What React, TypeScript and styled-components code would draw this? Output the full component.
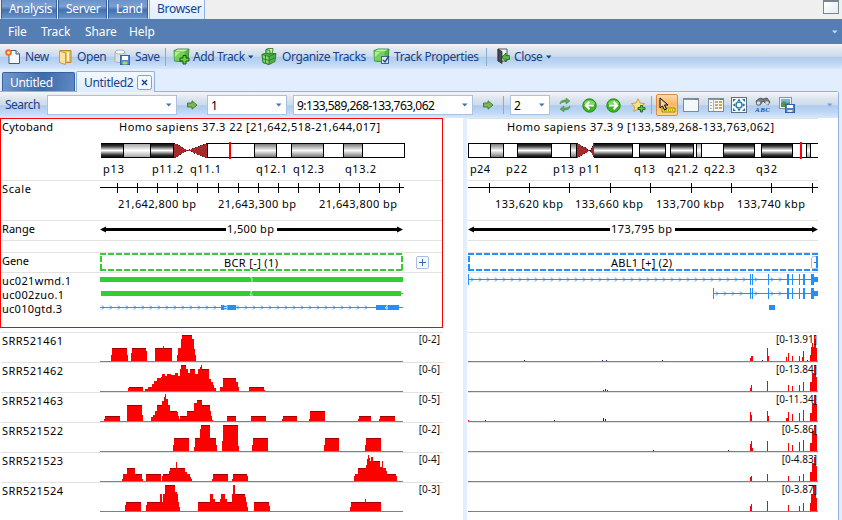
import React from 'react';
import styled, { createGlobalStyle } from 'styled-components';

const Global = createGlobalStyle`
  * { box-sizing: border-box; }
  body { margin: 0; background: #e2eefe; overflow: hidden; font-family: "Noto Sans", sans-serif; font-size: 12px; }
  svg { display: block; flex: none; }
  text { font-family: "Noto Sans", sans-serif; fill: #000; }
`;

const barGradient = 'linear-gradient(#f4f5f7 0%, #dde5ef 25%, #cddbeb 49%, #afcbed 53%, #bfd7f5 78%, #d8e8fc 100%)';

const Window = styled.div`
  width: 842px; height: 520px; display: flex; flex-direction: column; overflow: hidden; background: #e2eefe;
`;
const AppTabs = styled.div`
  display: flex; flex: none; height: 19px; background: #efefef; padding-left: 1px;
`;
const AppTab = styled.div<{ $w: number; $active?: boolean }>`
  width: ${p => p.$w}px; height: 19px; margin-right: 1px; padding-left: 7px; line-height: 18px; white-space: nowrap;
  letter-spacing: -0.3px;
  color: ${p => (p.$active ? '#15428b' : '#fff')};
  background: ${p => (p.$active ? 'linear-gradient(#f2f7fe, #e0edfe)' : 'linear-gradient(#6b93c8, #7ba0d0 35%, #4570ae 55%, #6893c8)')};
  border: solid ${p => (p.$active ? '#8fb2e2' : '#34619f')}; border-width: 0 1px; 
  border-bottom: ${p => (p.$active ? '0' : '1px solid #8fb2e2')};
`;
const WindowButton = styled.div`
  margin: 0 3px 0 auto; width: 16px; height: 14px; border: 1px solid #76858f; border-top-width: 2px;
  background: linear-gradient(135deg, #fff, #e3edf0);
`;
const MenuBar = styled.div`
  display: flex; flex: none; align-items: center; height: 25px; background: #557eb4; color: #fff; padding-left: 8px;
`;
const MenuItem = styled.div<{ $w: number }>`
  width: ${p => p.$w}px; flex: none; padding-bottom: 1px; letter-spacing: -0.1px;
`;
const ToolBar = styled.div`
  display: flex; flex: none; align-items: center; height: 25px; background: ${barGradient}; padding-left: 5px;
`;
const ToolItem = styled.div<{ $w: number; $gap?: number }>`
  width: ${p => p.$w}px; display: flex; align-items: center; flex: none; gap: ${p => p.$gap ?? 4}px;
  color: #15428b; white-space: nowrap; letter-spacing: -0.4px;
  span { line-height: 18px; padding-top: 1px; }
`;
const Divider = styled.div<{ $after: number }>`
  flex: none; width: 1px; height: 18px; background: #8aabd5; margin-right: ${p => p.$after}px;
`;
const Spacer = styled.div<{ $w: number }>`
  flex: none; width: ${p => p.$w}px;
`;
const DocTabs = styled.div`
  display: flex; flex: none; height: 22px; padding: 2px 0 0 2px; background: #e2eefe; align-items: flex-end;
`;
const DocTab = styled.div<{ $w: number; $active?: boolean }>`
  position: relative; z-index: ${p => (p.$active ? 1 : 0)};
  width: ${p => p.$w}px; height: ${p => (p.$active ? 21 : 19)}px; margin-bottom: ${p => (p.$active ? -1 : 0)}px; margin-right: 1px; padding: 0 2px 0 7px;
  display: flex; align-items: center; justify-content: space-between; letter-spacing: -0.3px;
  border: 1px solid ${p => (p.$active ? '#8fb2e2' : '#34619f')}; border-bottom: 0; border-radius: 2px 2px 0 0;
  color: ${p => (p.$active ? '#15428b' : '#fff')};
  background: ${p => (p.$active ? 'linear-gradient(#f3f8fe, #dfecfd)' : 'linear-gradient(100deg, #7199cd, #3f6bab 55%, #5d8ac4)')};
`;
const Document = styled.div`
  flex: 1; display: flex; flex-direction: column; margin-right: 3px; border: solid #8db2e6; border-width: 1px 1px 0 0;
  border-top-right-radius: 3px; background: #fff; min-height: 0;
`;
const SearchBar = styled.div`
  display: flex; flex: none; height: 26px; align-items: center; background: ${barGradient}; padding-left: 5px;
`;
const SearchLabel = styled.div`
  flex: none; width: 42px; color: #15428b; letter-spacing: -0.5px; padding-bottom: 1px;
`;
const Combo = styled.div<{ $w: number; $after: number }>`
  flex: none; width: ${p => p.$w}px; height: 20px; margin-right: ${p => p.$after}px; background: #fff; border: 1px solid #a9c1e3;
  display: flex; align-items: center; justify-content: space-between; padding: 0 4px 0 3px; white-space: nowrap;
  color: #000; letter-spacing: -0.52px;
`;
const WideCombo = styled(Combo)`
  letter-spacing: -0.52px;
`;
const IconSlot = styled.div<{ $w: number; $on?: boolean }>`
  flex: none; width: ${p => p.$w}px; height: 22px; display: flex; align-items: center; justify-content: center;
  ${p => p.$on && 'border: 1px solid #d98b4a; background: linear-gradient(#fbd9a8, #f8b764 45%, #fcd784); border-radius: 2px;'}
`;
const Views = styled.div`
  flex: 1; display: flex; min-height: 0; background: #fff;
`;
const Splitter = styled.div`
  width: 4px; margin: 0 1px 0 20px; background: #e2eefc; flex: none;
`;
const Panel = styled.div<{ $w: number }>`
  width: ${p => p.$w}px; flex: none; display: flex; flex-direction: column;
`;
const Header = styled.div<{ $selected?: boolean }>`
  height: 210px; flex: none; margin-bottom: 4px; overflow: hidden;
  border: ${p => (p.$selected ? '1px solid #f00' : '0 solid')}; 
`;
const Row = styled.div<{ $h: number; $line?: boolean; $pull?: boolean }>`
  position: relative; display: flex; height: ${p => p.$h}px; flex: none;
  border-top: ${p => (p.$line === false ? '0' : '1px solid #e2e2e2')};
  margin-left: ${p => (p.$pull ? 1 : 0)}px;
`;
const Names = styled.div`
  width: 99px; flex: none; padding-left: 1px;
`;
const RangeTag = styled.div<{ $right: number }>`
  position: absolute; right: ${p => p.$right}px; top: -1px; font-size: 10px; line-height: 14px; color: #111;
`;
const AddButton = styled.div`
  width: 13px; height: 13px; margin: 3px 0 0 13px; border: 1px solid #a9bfdf; border-radius: 2px; background: #f6faff;
  display: flex; align-items: center; justify-content: center;
`;

const Label = ({ x, y, w, children, size = 11 }: { x: number; y: number; w: number; children: string; size?: number }) => (
  <text x={x} y={y} textLength={w} lengthAdjust="spacing" fontSize={size}>{children}</text>
);
const NameLabel = ({ w, children, y = 12, h = 18 }: { w: number; children: string; y?: number; h?: number }) => (
  <svg width="98" height={h} overflow="visible"><Label x={0} y={y} w={w}>{children}</Label></svg>
);

const Caret = ({ color = '#15428b' }: { color?: string }) => (
  <svg width="6" height="4"><path d="M0 .5h5.5L2.75 3.5z" fill={color} /></svg>
);

/* ---------- toolbar icons ---------- */
const NewIcon = () => (
  <svg width="16" height="16" viewBox="0 0 16 16">
    <path d="M4 1.5h7l3.5 3.5v9.500h-10.500z" fill="#f4f8fd" stroke="#4a5d78" />
    <path d="M11 1.500v3.500h3.500" fill="#cad8ea" stroke="#4a5d78" />
    <circle cx="3.500" cy="3.500" r="3.300" fill="#f0682c" /><circle cx="3.500" cy="3.500" r="1.500" fill="#ffe36b" />
  </svg>
);
const OpenIcon = () => (
  <svg width="15" height="16" viewBox="0 0 15 16">
    <path d="M2 1.500h11v12h-11z" fill="#e9bf62" stroke="#bd8a31" />
    <path d="M1.500 2l6 2v11.500l-6-2z" fill="#fbe2a0" stroke="#d39b3c" /><path d="M9 3h2v9h-2z" fill="#fff3cf" />
  </svg>
);
const SaveIcon = () => (
  <svg width="17" height="16" viewBox="0 0 17 16">
    <path d="M1 3v9c0 2 10 2 10 0v-9z" fill="#dfe3e8" stroke="#9aa4b0" strokeWidth=".8" /><ellipse cx="6" cy="3" rx="5" ry="2" fill="#f8f9fb" stroke="#9aa4b0" strokeWidth=".8" />
    <rect x="6.500" y="6.500" width="9" height="9" fill="#4f83cc" stroke="#3564a8" /><rect x="8" y="7" width="6" height="4" fill="#fff" /><rect x="8.500" y="12.500" width="5" height="3" fill="#9ddc6c" />
  </svg>
);
const Cube = ({ badge }: { badge: 'plus' | 'link' | 'check' }) => (
  <svg width="17" height="17" viewBox="0 0 17 17">
    {badge !== 'link' && <g>
      <path d="M1 2.500l4-1.500h11l-1 10.500-3.500 2.500-10-1z" fill="#55b848" stroke="#277c28" strokeWidth=".8" />
      <path d="M1.500 3h10v10.500l-10-1z" fill="#74d05d" /><path d="M2 3l3-1.500h10l-3.500 1.800z" fill="#c8f4b4" /><path d="M2 4h5l-5 5z" fill="#b5ec9e" />
    </g>}
    {badge === 'plus' && <path d="M10 7.500h3v2.500h3v3h-3v3h-3v-3h-3v-3h3z" fill="#68d43c" stroke="#174f19" />}
    {badge === 'link' && <g stroke="#24702a" strokeWidth=".8">
      <path d="M1 6.500l2-1h12l-1 8-6 3-6-2z" fill="#4fb344" /><path d="M1 6.500l7 2v8l-6-2z" fill="#7fdb68" />
      <path d="M5 1.500l2-1h5l-.5 4L9 6 5 5z" fill="#c9f5b8" /><path d="M5 1.500l4 .8V6L5 5z" fill="#8be274" /><path d="M8 8.500l7-3M4.500 7.500v8M1.500 10.500l6.500 2 6.500-3" fill="none" />
    </g>}
    {badge === 'check' && <g><rect x="8.500" y="8.500" width="7" height="7" fill="#d8e8fb" stroke="#43618a" /><path d="M10 12l2 2 4-6" stroke="#1d4c8b" strokeWidth="1.400" fill="none" /></g>}
  </svg>
);
const DoorIcon = () => (
  <svg width="13" height="17" viewBox="0 0 13 17">
    <path d="M1 1h9v12H1z" fill="#eef0f2" stroke="#555" /><path d="M1 1l4 2.500v12L1 13z" fill="#444b52" stroke="#222" strokeWidth=".7" />
    <path d="M5 9l4-4v2.500h3.500v4H9V14z" fill="#50b83e" stroke="#1f661b" strokeWidth=".8" />
  </svg>
);
const GoIcon = () => (
  <svg width="11" height="10" viewBox="0 0 11 10"><path d="M.5 3h4.500V.8L10 5 5 9.200V7H.5z" fill="#7cb659" stroke="#477d3a" /></svg>
);
const RefreshIcon = () => (
  <svg width="12" height="14" viewBox="0 0 12 14">
    <path d="M1 6c0-4 4-4 6-4V0l4 3-4 3V4C5 4 3 4 1 6zM11 8c0 4-4 4-6 4v2l-4-3 4-3v2c2 0 4 0 6-2z" fill="#62a85e" stroke="#3b8247" strokeWidth=".5" />
  </svg>
);
const CircleArrow = ({ back }: { back?: boolean }) => (
  <svg width="15" height="15" viewBox="0 0 15 15">
    <circle cx="7.500" cy="7.500" r="6.700" fill="#3fb323" stroke="#258c1a" /><path d="M2 6c1-5 10-5 11 0" fill="#83d865" />
    <path d={back ? 'M12 7.500H4M7.500 3.800L3.800 7.500l3.700 3.700' : 'M3 7.500h8M7.500 3.800l3.700 3.700-3.700 3.700'} stroke="#fff" strokeWidth="2" fill="none" />
  </svg>
);
const StarIcon = () => (
  <svg width="15" height="15" viewBox="0 0 15 15">
    <path d="M7 .8l2 4.200 4.700.6-3.500 3.200.9 4.700L7 11.200l-4.200 2.300.9-4.700L.4 5.600 5 5z" fill="#fae187" stroke="#c69a43" strokeWidth=".9" />
    <path d="M9.500 7.500h2v2h2.500v2h-2.500v2.500h-2v-2.500H7v-2h2.500z" fill="#63cf38" stroke="#15611a" strokeWidth=".9" />
  </svg>
);
const PointerIcon = () => (
  <svg width="17" height="17" viewBox="0 0 17 17">
    <path d="M3 11h13v4H3z" fill="#ffed00" stroke="#99851d" /><path d="M5 13h10" stroke="#7d6c1a" strokeDasharray="1 1" />
    <path d="M1 1v10l2.500-2 2 4 2-1-2-4H9z" fill="#f7cf98" stroke="#000" />
  </svg>
);
const PaneIcon = ({ split }: { split?: boolean }) => (
  <svg width="16" height="15" viewBox="0 0 16 15" shapeRendering="crispEdges">
    <rect x=".5" y=".5" width="15" height="13" fill="#f3f8fa" stroke="#7b8b98" /><path d="M1 1h11" stroke="#8597a6" /><path d="M12 1h3" stroke="#dd5044" />
    {split && <g><path d="M5.500 2v11" stroke="#a7b3be" /><path d="M2 4h2M2 7h2M2 10h2" stroke="#9eb0c2" /><path d="M7 4h7M7 7h7M7 10h7" stroke="#d5a655" strokeWidth="2" strokeDasharray="3 1" /></g>}
  </svg>
);
const FitIcon = () => (
  <svg width="16" height="16" viewBox="0 0 16 16">
    <rect x=".5" y=".5" width="15" height="15" fill="#f5faff" stroke="#5e7080" />
    <circle cx="8" cy="8" r="3" fill="#fff" stroke="#3579aa" strokeWidth="1.500" />
    <path d="M2 2h3L2 5zM14 2h-3l3 3zM2 14h3l-3-3zM14 14h-3l3-3zM8 1.500L9.500 4h-3zM8 14.500L9.500 12h-3zM1.500 8L4 6.500v3zM14.500 8L12 6.500v3z" fill="#286ea2" />
  </svg>
);
const FindIcon = () => (
  <svg width="16" height="16" viewBox="0 0 16 16">
    <path d="M1 4l4-3 3 1 4-1 3 4-2 3-3-2-2-2-3 4H2z" fill="#767b80" stroke="#42474c" strokeWidth=".8" /><circle cx="3.500" cy="6" r="1.800" fill="#d9dfe4" /><circle cx="12" cy="6" r="1.800" fill="#d9dfe4" />
    <text x="0" y="15" textLength="15" style={{ fontFamily: 'Liberation Serif', fontSize: '7px', fontWeight: 700, fontStyle: 'italic', fill: '#1f529c' }}>ABC</text>
  </svg>
);
const SnapshotIcon = () => (
  <svg width="16" height="16" viewBox="0 0 16 16">
    <rect x=".5" y=".5" width="12" height="11" fill="#f0f4f7" stroke="#8595a3" /><rect x="2" y="2" width="9" height="8" fill="#7fb2dc" /><path d="M2 10V6l3-2 3 2 3-1v5z" fill="#4c9844" />
    <rect x="6.500" y="7.500" width="9" height="8" fill="#4b83cf" stroke="#3161a6" /><path d="M8 8h6v3H8z" fill="#fff" /><path d="M8.500 13h5v2h-5z" fill="#dcebc7" />
  </svg>
);

/* ---------- chromosome ideogram ---------- */
type Band = [number, number, 'dark' | 'mid' | 'light' | 'white'];
const Ideogram = ({ w, bands, centro, mark, open, title, names, shift = 0 }: {
  w: number; bands: Band[]; centro: [number, number, number]; mark: number; open?: boolean; shift?: number;
  title: [number, number, string]; names: [number, number, string][];
}) => (
  <svg width={w} height="60" overflow="visible">
    <defs>
      <linearGradient id="dark" x2="0" y2="1"><stop stopColor="#000" /><stop offset=".2" stopColor="#333" /><stop offset=".5" stopColor="#fff" /><stop offset=".8" stopColor="#333" /><stop offset="1" stopColor="#000" /></linearGradient>
      <linearGradient id="mid" x2="0" y2="1"><stop stopColor="#666" /><stop offset=".5" stopColor="#f7f7f7" /><stop offset="1" stopColor="#666" /></linearGradient>
      <linearGradient id="light" x2="0" y2="1"><stop stopColor="#999" /><stop offset=".5" stopColor="#fff" /><stop offset="1" stopColor="#999" /></linearGradient>
    </defs>
    <Label x={title[0]} y={12} w={title[1]}>{title[2]}</Label>
    <g shapeRendering="crispEdges" transform={`translate(${shift} 0)`}>
      {bands.map(([x0, x1, k]) => (
        <g key={x0}>
          <rect x={x0} y={24} width={x1 - x0} height={15} fill={k === 'white' ? '#fff' : `url(#${k})`} />
          <path d={`M${x0} 24.500H${x1}M${x0} 38.500H${x1}M${x1 - 0.5} 24V39`} stroke="#000" fill="none" />
        </g>
      ))}
      {!open && <path d="M.5 24V39" stroke="#000" />}
      <path d={`M${centro[0]} 24L${centro[1]} 31.500L${centro[0]} 39z`} fill="#a52a2a" />
      <path d={`M${centro[2]} 24L${centro[1]} 31.500L${centro[2]} 39z`} fill="#a52a2a" />
      <path d={`M${centro[0]} 24L${centro[1]} 31.500L${centro[0]} 39M${centro[2]} 24L${centro[1]} 31.500L${centro[2]} 39`} fill="none" stroke="#000" strokeDasharray="1 2" strokeWidth=".8" />
      {open && <path d={`M${centro[2] + 0.5} 24V39`} stroke="#000" />}
      <rect x={mark} y="23" width="2" height="17" fill="#f00" />
    </g>
    {names.map(([x, tw, t]) => <Label key={t} x={x + shift} y={54} w={tw}>{t}</Label>)}
  </svg>
);

const Scale = ({ w, ticks, labels }: { w: number; ticks: number[]; labels: [number, number, string][] }) => (
  <svg width={w} height="39">
    <path d={`M0 6.500H${w}` + ticks.map(t => `M${t + 0.5} 1.500v10`).join('')} stroke="#000" shapeRendering="crispEdges" />
    {labels.map(([x, tw, t]) => <Label key={t} x={x} y={27} w={tw}>{t}</Label>)}
  </svg>
);

const Extent = ({ w, gap, text }: { w: number; gap: [number, number]; text: string }) => (
  <svg width={w} height="19">
    <path d={`M3 8.500H${gap[0]}M${gap[1]} 8.500H${w - 3}`} stroke="#000" strokeWidth="3" />
    <path d={`M0 8.500l6-3v6zM${w} 8.500l-6-3v6z`} fill="#000" />
    <Label x={gap[0] + 1} y={12} w={gap[1] - gap[0] - 4}>{text}</Label>
  </svg>
);

const GeneBox = ({ w, color, x, tw, text, clipped }: { w: number; color: string; x: number; tw: number; text: string; clipped?: boolean }) => (
  <svg width={w} height="19">
    <path d={`M0 1H${w}M0 17H${w}`} stroke={color} strokeWidth="2" strokeDasharray="6 2" shapeRendering="crispEdges" />
    <path d={`M1 3V17M${w - 1} 3V17`} stroke={color} strokeWidth="2" strokeDasharray="6 2" shapeRendering="crispEdges" />
    <Label x={x} y={14} w={tw}>{text}</Label>
    {clipped && <g><rect x={w - 6.5} y="3.500" width="12" height="12" rx="2" fill="#fff" stroke="#a9bfdf" /><path d={`M${w - 4} 9.500h4`} stroke="#2d6cb5" /><path d={`M${w - 1} 3V15`} stroke={color} strokeWidth="2" /></g>}
  </svg>
);

const chevrons = (from: number, to: number, y: number, step = 8) => {
  let d = '';
  for (let x = from; x <= to; x += step) d += `M${x} ${y - 2}l2 2l-2 2`;
  return d;
};
const Exons = ({ items, y, tall }: { items: [number, number][]; y: number; tall?: boolean }) => (
  <>{items.map(([x, w]) => <rect key={x} x={x} y={tall ? y - 5 : y - 2} width={w} height={tall ? 11 : 5} fill="#1e90ff" />)}</>
);

const LeftTranscripts = () => (
  <svg width="303" height="52" shapeRendering="crispEdges">
    <rect x="0" y="4" width="303" height="5" fill="#32cd32" /><rect x="1" y="18" width="300" height="5" fill="#32cd32" /><path d="M301 20.500h2" stroke="#32cd32" />
    <path d="M0 34.500H303" stroke="#1e90ff" /><path d={chevrons(2, 116, 34.5) + chevrons(137, 271, 34.5)} stroke="#1e90ff" fill="none" shapeRendering="auto" />
    <rect x="121" y="32" width="15" height="5" fill="#1e90ff" /><rect x="276" y="32" width="23" height="5" fill="#1e90ff" />
    <path d="M150 4l2 1v4M150 18h2l-2 4h3M124 32.500h3v2h-3M127 34.500v2h-3M287 33l-2 2h3M287 32v5" stroke="#d9ffe0" fill="none" strokeWidth=".8" shapeRendering="auto" />
  </svg>
);
const RightTranscripts = () => (
  <svg width="350" height="52" shapeRendering="crispEdges">
    <path d="M0 6.500H350M245 20.500H350" stroke="#1e90ff" />
    <path d={chevrons(3, 276, 6.5) + 'M287 4.500l2 2l-2 2M303 4.500l2 2l-2 2M311 4.500l2 2l-2 2' + chevrons(248, 276, 20.5) + 'M287 18.500l2 2l-2 2M303 18.500l2 2l-2 2M311 18.500l2 2l-2 2'} stroke="#1e90ff" fill="none" shapeRendering="auto" />
    <Exons y={6} tall items={[[0, 1], [282, 1], [284, 1], [300, 1], [319, 2], [324, 1], [331, 1], [335, 2], [343, 3]]} />
    <Exons y={20} tall items={[[245, 1], [282, 1], [284, 1], [300, 1], [319, 2], [324, 1], [331, 1], [335, 2], [343, 3]]} />
    <Exons y={6} items={[[344, 6]]} /><Exons y={20} items={[[344, 6]]} /><Exons y={34} items={[[301, 6]]} />
  </svg>
);

/* ---------- coverage tracks: "x:height" steps held until the next step ---------- */
const Coverage = ({ w, steps, dots = [] }: { w: number; steps: string; dots?: [number, number][] }) => {
  const pts = steps.split(' ').map(s => s.split(':').map(Number));
  return (
    <svg width={w} height="29" shapeRendering="crispEdges">
      {pts.map(([x, h], i) => {
        const end = pts[i + 1]?.[0] ?? x;
        return h > 0 && end > x ? (
          <g key={x}><rect x={x} y={28 - h} width={end - x} height={h} fill="#f00" />{end - x > 4 && <rect x={x} y={28 - h} width={end - x} height="1" fill="#a00000" />}</g>
        ) : null;
      })}
      {dots.map(([x, h]) => <rect key={x} x={x} y={28 - h} width="1" height={h} fill="#4b0082" />)}
      <rect x="0" y="28" width={w} height="1" fill="#808080" />
    </svg>
  );
};

const samples = [
  { id: 'SRR521461', l: '[0-2]', r: '[0-13.91]',
    left: '11:6 12:13 27:6 28:0 31:8 32:13 46:10 47:0 55:13 63:15 64:13 72:0 77:6 78:13 81:22 82:26 92:22 94:12 95:6 96:0',
    right: '282:3 283:5 285:0 299:13 300:5 301:0 318:4 319:0 320:8 321:0 324:5 325:0 331:5 332:0 334:4 335:10 336:0 342:6 343:14 344:18 345:14 346:26 347:22 348:13 349:0', dots: [[56, 1], [134, 1], [138, 1], [194, 1], [294, 1], [339, 1]] },
  { id: 'SRR521462', l: '[0-6]', r: '[0-13.84]',
    left: '28:3 29:4 43:0 45:2 48:4 52:7 54:10 57:13 61:14 62:17 65:15 67:17 71:16 75:18 78:15 80:22 81:26 86:22 88:18 90:22 95:17 98:22 100:24 101:26 102:22 109:12 111:9 113:6 114:3 116:0 120:4 123:13 136:9 138:4 139:0 149:4 164:1 165:0',
    right: '282:3 283:6 284:0 299:10 300:0 320:6 321:0 324:5 325:0 331:6 332:0 335:9 336:0 342:9 344:18 346:26 348:14 349:0', dots: [[135, 1], [137, 2], [139, 1]] },
  { id: 'SRR521463', l: '[0-5]', r: '[0-11.34]',
    left: '4:2 5:5 20:0 27:16 42:6 43:0 51:4 53:6 55:10 57:16 62:20 64:24 65:27 66:22 68:16 70:10 77:9 78:5 79:2 80:5 87:10 94:18 97:21 102:16 110:10 111:5 112:1 113:0 127:5 136:0 151:5 166:0 182:2 183:5 197:0 209:2 210:10 225:0 258:2 259:5 271:0 279:2 280:5 295:0',
    right: '0:1 1:0 282:9 283:6 284:0 299:10 300:5 301:0 318:3 320:9 321:0 324:7 325:0 331:8 332:0 335:11 336:0 342:8 344:18 346:26 348:17 349:0', dots: [[17, 1], [86, 1], [135, 3], [137, 2]] },
  { id: 'SRR521522', l: '[0-2]', r: '[0-5.86]',
    left: '73:6 74:13 89:0 94:4 95:13 100:22 101:26 110:13 116:6 117:0 122:10 123:26 138:5 139:0 152:6 153:13 168:0 224:6 225:13 239:0 265:6 266:13 281:0',
    right: '282:7 283:10 284:3 285:0 299:10 300:0 320:8 321:0 324:6 325:0 331:9 332:0 335:11 336:0 342:8 344:20 346:26 348:17 349:0', dots: [[260, 1], [185, 1]] },
  { id: 'SRR521523', l: '[0-4]', r: '[0-4.83]',
    left: '22:2 23:7 27:13 35:7 42:2 43:0 46:7 61:0 62:5 63:7 69:10 70:13 76:19 77:13 85:9 87:7 90:4 91:2 92:0 112:2 113:7 128:0 132:2 133:7 147:5 148:0 254:5 255:7 258:13 266:16 267:22 268:26 269:23 270:20 271:24 273:20 280:14 282:20 283:13 286:10 287:7 296:5 297:0',
    right: '282:4 283:5 284:0 299:7 300:0 320:5 321:0 331:5 332:0 335:7 336:0 342:9 344:18 346:24 348:15 349:0', dots: [] },
  { id: 'SRR521524', l: '[0-3]', r: '[0-3.87]',
    left: '25:6 26:9 41:0 46:6 47:9 60:17 62:9 63:17 65:26 75:19 77:17 78:9 79:4 80:0 98:9 110:17 113:12 115:9 120:12 121:17 125:12 127:9 132:17 133:26 135:17 145:14 146:9 147:4 148:0 154:9 169:5 170:0 250:4 251:9 265:12 266:9 281:0',
    right: '282:5 283:7 284:0 299:10 300:0 320:6 321:0 331:5 332:0 335:8 336:0 342:8 343:17 345:26 348:13 349:0', dots: [] },
];

export default function App() {
  return (
    <Window>
      <Global />
      <AppTabs>
        <AppTab $w={56}>Analysis</AppTab><AppTab $w={49}>Server</AppTab><AppTab $w={40}>Land</AppTab><AppTab $w={56} $active>Browser</AppTab>
        <WindowButton />
      </AppTabs>
      <MenuBar>
        <MenuItem $w={33}>File</MenuItem><MenuItem $w={44}>Track</MenuItem><MenuItem $w={44}>Share</MenuItem><MenuItem $w={703}>Help</MenuItem><Caret color="#c7dcf7" />
      </MenuBar>
      <ToolBar>
        <ToolItem $w={53}><NewIcon /><span>New</span></ToolItem>
        <ToolItem $w={56}><OpenIcon /><span>Open</span></ToolItem>
        <ToolItem $w={51}><SaveIcon /><span>Save</span></ToolItem>
        <Divider $after={7} />
        <ToolItem $w={88} $gap={3}><Cube badge="plus" /><span>Add Track</span><Caret /></ToolItem>
        <ToolItem $w={112}><Cube badge="link" /><span>Organize Tracks</span></ToolItem>
        <ToolItem $w={113}><Cube badge="check" /><span>Track Properties</span></ToolItem>
        <Divider $after={10} />
        <ToolItem $w={60} $gap={4}><DoorIcon /><span>Close</span><Caret /></ToolItem>
      </ToolBar>
      <DocTabs>
        <DocTab $w={73}>Untitled</DocTab>
        <DocTab $w={79} $active>Untitled2
          <svg width="15" height="15"><rect x=".5" y=".5" width="14" height="14" rx="2" fill="#f5f9ff" stroke="#7f9fcc" /><path d="M5 5l5 5M10 5l-5 5" stroke="#15428b" strokeWidth="1.400" /></svg>
        </DocTab>
      </DocTabs>
      <Document>
        <SearchBar>
          <SearchLabel>Search</SearchLabel>
          <Combo $w={130} $after={10}><span /><Caret color="#3b73b9" /></Combo>
          <GoIcon />
          <Spacer $w={9} />
          <Combo $w={80} $after={6}>1<Caret color="#3b73b9" /></Combo>
          <WideCombo $w={180} $after={10}>9:133,589,268-133,763,062<Caret color="#3b73b9" /></WideCombo>
          <GoIcon />
          <Spacer $w={9} />
          <Divider $after={6} />
          <Combo $w={40} $after={3}>2<Caret color="#3b73b9" /></Combo>
          <IconSlot $w={24}><RefreshIcon /></IconSlot><IconSlot $w={24}><CircleArrow back /></IconSlot><IconSlot $w={24}><CircleArrow /></IconSlot><IconSlot $w={26}><StarIcon /></IconSlot>
          <Divider $after={4} />
          <IconSlot $w={22} $on><PointerIcon /></IconSlot><IconSlot $w={26}><PaneIcon /></IconSlot><IconSlot $w={23}><PaneIcon split /></IconSlot><IconSlot $w={24}><FitIcon /></IconSlot><IconSlot $w={24}><FindIcon /></IconSlot><IconSlot $w={24}><SnapshotIcon /></IconSlot>
          <Spacer $w={28} />
          <Caret color="#7d9fd0" />
        </SearchBar>
        <Views>
          <Panel $w={443}>
            <Header $selected>
              <Row $h={61} $line={false}><Names><NameLabel w={51}>Cytoband</NameLabel></Names>
                <Ideogram w={305} shift={1} mark={128} centro={[73, 87, 106]} title={[19, 261, 'Homo sapiens 37.3 22 [21,642,518-21,644,017]']}
                  bands={[[0, 23, 'dark'], [23, 50, 'light'], [50, 73, 'dark'], [106, 154, 'white'], [154, 176, 'mid'], [176, 191, 'white'], [191, 223, 'mid'], [223, 243, 'white'], [243, 262, 'mid'], [262, 304, 'white']]} open
                  names={[[2, 21, 'p13'], [51, 31, 'p11.2'], [89, 31, 'q11.1'], [155, 31, 'q12.1'], [192, 31, 'q12.3'], [244, 31, 'q13.2']]} />
              </Row>
              <Row $h={40}><Names><NameLabel w={29}>Scale</NameLabel></Names>
                <Scale w={304} ticks={[17, 37, 57, 77, 97, 118, 138, 158, 178, 198, 219, 239, 259, 279, 299]} labels={[[18, 78, '21,642,800 bp'], [118, 78, '21,643,300 bp'], [219, 78, '21,643,800 bp']]} />
              </Row>
              <Row $h={20}><Names><NameLabel w={33}>Range</NameLabel></Names><Extent w={303} gap={[126, 177]} text="1,500 bp" /></Row>
              <Row $h={12} />
              <Row $h={20}><Names><NameLabel w={27}>Gene</NameLabel></Names><GeneBox w={303} color="#32cd32" x={124} tw={54} text="BCR [-] (1)" />
                <AddButton><svg width="9" height="9"><path d="M1 4.500h7M4.500 1v7" stroke="#2d6cb5" /></svg></AddButton></Row>
              <Row $h={55}><Names>
                <NameLabel w={69} h={14}>uc021wmd.1</NameLabel><NameLabel w={62} h={14}>uc002zuo.1</NameLabel><NameLabel w={60} h={14}>uc010gtd.3</NameLabel>
              </Names><LeftTranscripts /></Row>
            </Header>
            {samples.map(s => (
              <Row key={s.id} $h={30} $pull><Names><NameLabel w={61}>{s.id}</NameLabel></Names><Coverage w={303} steps={s.left} /><RangeTag $right={3}>{s.l}</RangeTag></Row>
            ))}
          </Panel>
          <Splitter />
          <Panel $w={350}>
            <Header>
              <Row $h={62}>
                <Ideogram w={350} mark={332} centro={[109, 122, 126]} title={[39, 267, 'Homo sapiens 37.3 9 [133,589,268-133,763,062]']}
                  bands={[[0, 23, 'white'], [23, 36, 'mid'], [36, 50, 'white'], [50, 84, 'dark'], [84, 103, 'white'], [103, 109, 'mid'], [126, 165, 'dark'], [165, 172, 'white'], [172, 198, 'dark'], [198, 203, 'white'], [203, 226, 'dark'], [226, 229, 'white'], [229, 234, 'light'], [234, 256, 'white'], [256, 287, 'dark'], [287, 294, 'white'], [294, 325, 'dark'], [325, 339, 'white'], [339, 343, 'light'], [343, 351, 'white']]}
                  names={[[2, 20, 'p24'], [38, 21, 'p22'], [85, 21, 'p13'], [111, 21, 'p11'], [166, 21, 'q13'], [199, 31, 'q21.2'], [236, 31, 'q22.3'], [288, 21, 'q32']]} />
              </Row>
              <Row $h={40}><Scale w={350} ticks={[21, 61, 101, 142, 182, 223, 263, 303, 344]} labels={[[27, 68, '133,620 kbp'], [107, 68, '133,660 kbp'], [188, 68, '133,700 kbp'], [269, 68, '133,740 kbp']]} /></Row>
              <Row $h={20}><Extent w={350} gap={[142, 207]} text="173,795 bp" /></Row>
              <Row $h={12} />
              <Row $h={20}><GeneBox w={350} color="#1e90ff" x={143} tw={61} text="ABL1 [+] (2)" clipped /></Row>
              <Row $h={55}><RightTranscripts /></Row>
            </Header>
            {samples.map(s => (
              <Row key={s.id} $h={30}><Coverage w={350} steps={s.right} dots={s.dots as [number, number][]} /><RangeTag $right={1}>{s.r}</RangeTag></Row>
            ))}
          </Panel>
        </Views>
      </Document>
    </Window>
  );
}
